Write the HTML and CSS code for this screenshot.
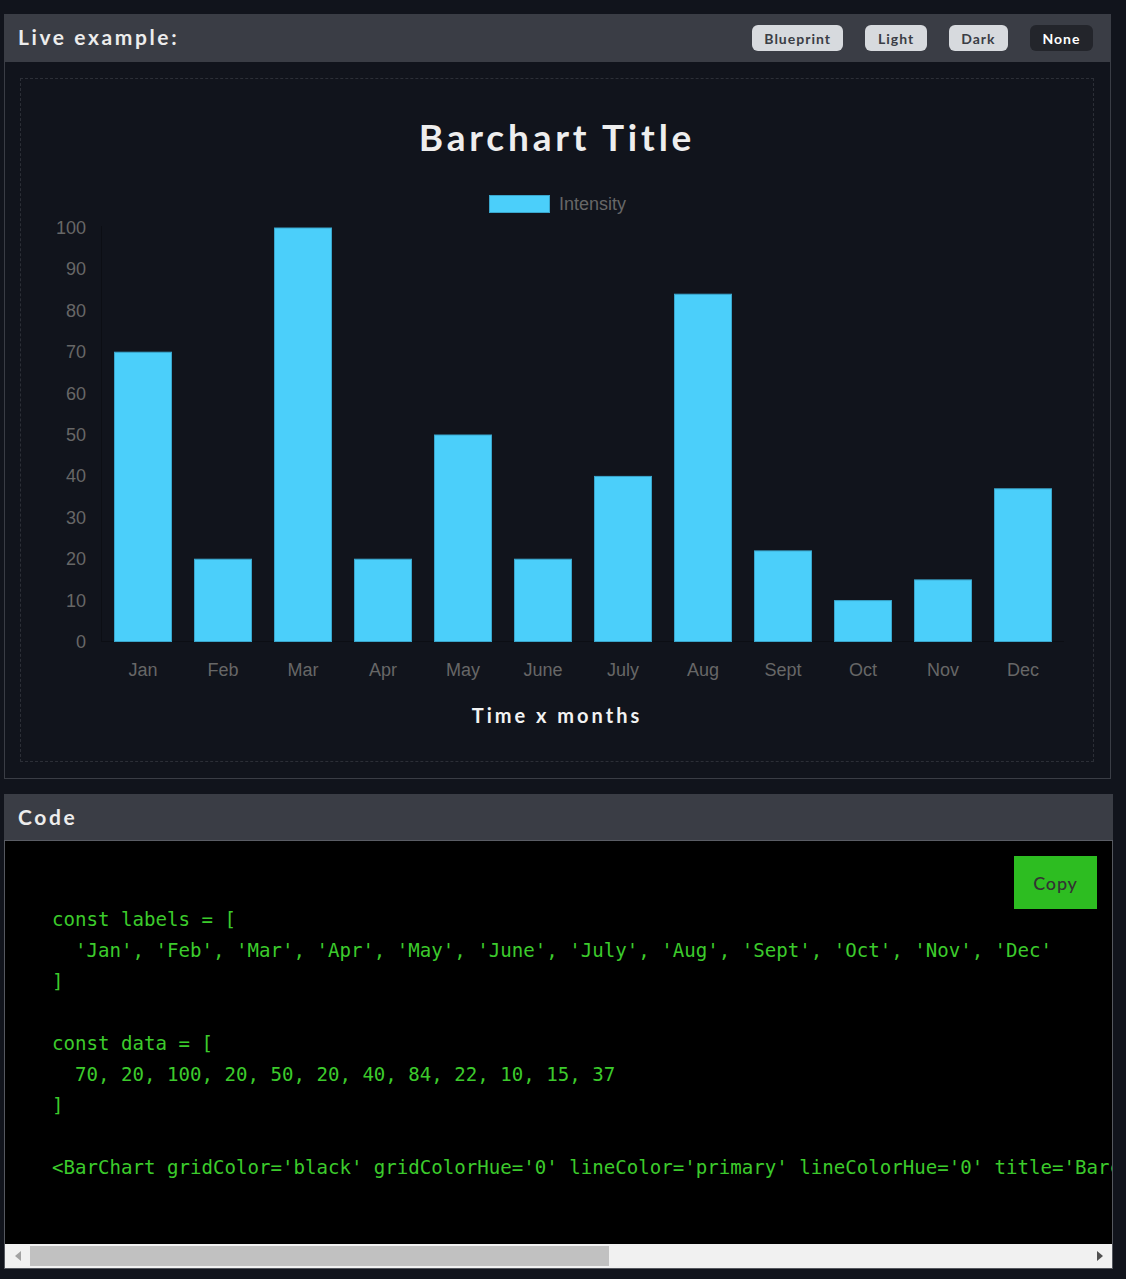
FILE: index.html
```html
<!DOCTYPE html>
<html lang="en">
<head>
<meta charset="utf-8">
<title>Barchart</title>
<link rel="stylesheet" href="styles.css">
</head>
<body>
<main class="page">
  <section class="panel live">
    <header class="panel-head">
      <h2 class="panel-title">Live example:</h2>
      <nav class="themes">
        <button class="theme">Blueprint</button>
        <button class="theme">Light</button>
        <button class="theme">Dark</button>
        <button class="theme active">None</button>
      </nav>
    </header>
    <div class="live-body">
      <div class="chart-box">
        <h1 class="chart-title">Barchart Title</h1>
        <svg class="chart" width="1072" height="505" viewBox="0 0 1072 505">
          <rect class="bar" x="468.5" y="11.5" width="60" height="17"/>
          <text class="lbl" x="538" y="25.5">Intensity</text>
          <g class="yticks">
            <text x="65" y="50">100</text>
            <text x="65" y="91.4">90</text>
            <text x="65" y="132.8">80</text>
            <text x="65" y="174.2">70</text>
            <text x="65" y="215.6">60</text>
            <text x="65" y="257">50</text>
            <text x="65" y="298.4">40</text>
            <text x="65" y="339.8">30</text>
            <text x="65" y="381.2">20</text>
            <text x="65" y="422.6">10</text>
            <text x="65" y="464">0</text>
          </g>
          <line class="axis" x1="80.5" y1="42" x2="80.5" y2="458"/>
          <line class="axis" x1="80" y1="457.5" x2="1043" y2="457.5"/>
          <g class="bars">
            <rect class="bar" x="93.5" y="168.2" width="57" height="289.3"/>
            <rect class="bar" x="173.5" y="375.2" width="57" height="82.3"/>
            <rect class="bar" x="253.5" y="44" width="57" height="413.5"/>
            <rect class="bar" x="333.5" y="375.2" width="57" height="82.3"/>
            <rect class="bar" x="413.5" y="251" width="57" height="206.5"/>
            <rect class="bar" x="493.5" y="375.2" width="57" height="82.3"/>
            <rect class="bar" x="573.5" y="292.4" width="57" height="165.1"/>
            <rect class="bar" x="653.5" y="110.2" width="57" height="347.3"/>
            <rect class="bar" x="733.5" y="366.9" width="57" height="90.6"/>
            <rect class="bar" x="813.5" y="416.6" width="57" height="40.9"/>
            <rect class="bar" x="893.5" y="395.9" width="57" height="61.6"/>
            <rect class="bar" x="973.5" y="304.8" width="57" height="152.7"/>
          </g>
          <g class="xticks">
            <text x="122" y="491.5">Jan</text>
            <text x="202" y="491.5">Feb</text>
            <text x="282" y="491.5">Mar</text>
            <text x="362" y="491.5">Apr</text>
            <text x="442" y="491.5">May</text>
            <text x="522" y="491.5">June</text>
            <text x="602" y="491.5">July</text>
            <text x="682" y="491.5">Aug</text>
            <text x="762" y="491.5">Sept</text>
            <text x="842" y="491.5">Oct</text>
            <text x="922" y="491.5">Nov</text>
            <text x="1002" y="491.5">Dec</text>
          </g>
        </svg>
        <p class="axis-title">Time x months</p>
      </div>
    </div>
  </section>

  <section class="panel code">
    <header class="panel-head code-head">
      <h2 class="panel-title">Code</h2>
    </header>
    <div class="code-body">
      <button class="copy">Copy</button>
      <pre class="code-text">const labels = [
  'Jan', 'Feb', 'Mar', 'Apr', 'May', 'June', 'July', 'Aug', 'Sept', 'Oct', 'Nov', 'Dec'
]

const data = [
  70, 20, 100, 20, 50, 20, 40, 84, 22, 10, 15, 37
]

&lt;BarChart gridColor='black' gridColorHue='0' lineColor='primary' lineColorHue='0' title='Barchart Title' xAxisLabel='Time x months' labels={labels} data={data} /&gt;</pre>
      <div class="scrollbar">
        <span class="arrow left"></span>
        <span class="track"><span class="thumb"></span></span>
        <span class="arrow right"></span>
      </div>
    </div>
  </section>
</main>
</body>
</html>
```

FILE: styles.css
```css
* { box-sizing: border-box; }

html, body {
  margin: 0;
  padding: 0;
  background: #11141c;
}

body {
  font-family: "Lato", "Noto Sans", sans-serif;
  color: #eee;
}

.page {
  padding: 14px 13px 8px 4px;
  display: flex;
  flex-direction: column;
  gap: 15px;
}

.panel {
  border: 1px solid #3a3d45;
  border-top: none;
}

.live { width: 1107px; }

.panel-head {
  height: 48px;
  background: #3a3d45;
  display: flex;
  align-items: center;
  justify-content: space-between;
  padding: 0 18px 3px 14px;
  margin: 0 -1px;
}

.panel-title {
  margin: 0;
  font-size: 21px;
  font-weight: 700;
  letter-spacing: 2.6px;
  color: #ececec;
}

.themes {
  display: flex;
  gap: 22px;
  padding-top: 3px;
}

.theme {
  font-family: "Lato", "Noto Sans", sans-serif;
  font-size: 14px;
  font-weight: 700;
  letter-spacing: 1px;
  height: 26px;
  padding: 0 12.5px;
  border: none;
  border-radius: 6px;
  background: #d7dade;
  color: #3a3d45;
}

.theme.active {
  background: #23252b;
  color: #fff;
}

.live-body {
  padding: 16px 16px 16px 15px;
}

.chart-box {
  border: 1px dashed #2c2f37;
  height: 684px;
  display: flex;
  flex-direction: column;
  align-items: center;
}

.chart-title {
  margin: 36px 0 0;
  height: 44px;
  line-height: 44px;
  font-size: 37px;
  font-weight: 700;
  letter-spacing: 3.8px;
  color: #eeeeee;
}

.chart {
  display: block;
  margin-top: 25px;
}

.chart text {
  font-family: "Liberation Sans", Arial, sans-serif;
  font-size: 18px;
  fill: #676767;
}

.yticks text { text-anchor: end; }
.xticks text { text-anchor: middle; }

.bar {
  fill: #4bcffa;
  stroke: #3aa6cc;
  stroke-width: 1;
}

.axis {
  stroke: #0c0e14;
  stroke-width: 1;
}

.axis-title {
  margin: 14px 0 0;
  line-height: 24px;
  font-size: 20px;
  font-weight: 700;
  letter-spacing: 3px;
  color: #f2f2f2;
}

.code {
  width: 1109px;
  border-color: #55585f;
}

.code-head {
  height: 47px;
  padding-bottom: 1px;
  border-bottom: 1px solid #5a5d65;
}

.code-body {
  position: relative;
  background: #000;
}

.copy {
  position: absolute;
  top: 15px;
  right: 15px;
  width: 83px;
  height: 53px;
  border: none;
  background: #2dbd21;
  color: #333;
  font-family: "Lato", "Noto Sans", sans-serif;
  font-size: 18px;
  font-weight: 500;
  letter-spacing: 0.8px;
}

.code-text {
  margin: 0;
  padding: 63px 0 61px 47px;
  height: 403px;
  overflow: hidden;
  white-space: pre;
  font-family: "DejaVu Sans Mono", "Liberation Mono", monospace;
  font-size: 19.1px;
  line-height: 31px;
  color: #3ccb2c;
}

.scrollbar {
  height: 24px;
  background: #f1f1f1;
  display: flex;
  align-items: stretch;
}

.arrow {
  width: 25px;
  display: flex;
  align-items: center;
  justify-content: center;
}

.arrow::before {
  content: "";
  width: 0;
  height: 0;
  border-top: 5px solid transparent;
  border-bottom: 5px solid transparent;
}

.arrow.left::before { border-right: 6px solid #a3a3a3; }
.arrow.right::before { border-left: 6px solid #505050; }

.track {
  flex: 1;
  padding: 2px 0 2px 0;
  display: flex;
}

.thumb {
  width: 579px;
  background: #c1c1c1;
}
```
